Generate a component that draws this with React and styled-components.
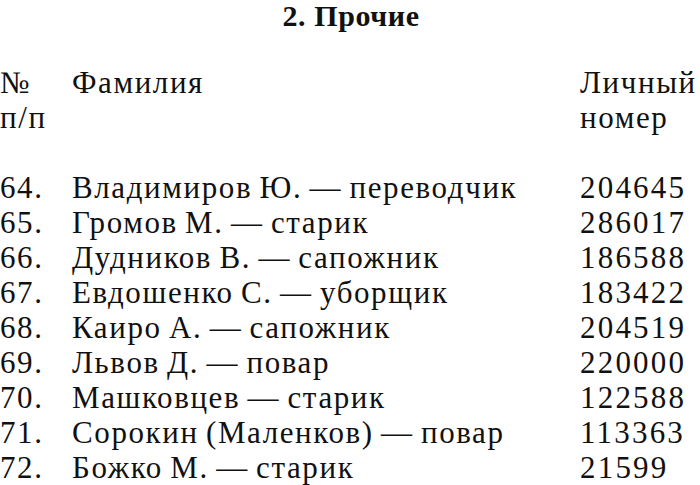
import React from 'react'
import styled, {createGlobalStyle} from 'styled-components'

const Global = createGlobalStyle`
    html, body {
      margin: 0;
      padding: 0;
      background: #fff;
    }
    body {
      width: 700px;
      height: 485px;
      overflow: hidden;
      font-family: "Liberation Serif", "Times New Roman", serif;
      color: #111;
    }
`

const rows = [
    ['64.', 'Владимиров Ю. — переводчик', '204645'],
    ['65.', 'Громов М. — старик', '286017'],
    ['66.', 'Дудников В. — сапожник', '186588'],
    ['67.', 'Евдошенко С. — уборщик', '183422'],
    ['68.', 'Каиро А. — сапожник', '204519'],
    ['69.', 'Львов Д. — повар', '220000'],
    ['70.', 'Машковцев — старик', '122588'],
    ['71.', 'Сорокин (Маленков) — повар', '113363'],
    ['72.', 'Божко М. — старик', '21599'],
]

export default function App() {
    return (<Page>
        <Global/>
        <Title>2. Прочие</Title>
        <Table>
            <Cell>№<br/>п/п</Cell>
            <Cell>Фамилия</Cell>
            <Cell>Личный<br/>номер</Cell>
        </Table>
        <Table $body>
            {rows.map(([n, name, num]) => (
                <React.Fragment key={n}>
                    <Cell>{n}</Cell>
                    <Cell>{name}</Cell>
                    <Cell $num>{num}</Cell>
                </React.Fragment>
            ))}
        </Table>
    </Page>);
}

const Page = styled.div`
    display: flex;
    flex-direction: column;
    font-family: "Liberation Serif", "Times New Roman", serif;
`

const Title = styled.h2`
    margin: 0;
    font-size: 30px;
    line-height: 32px;
    font-weight: bold;
    text-align: center;
    letter-spacing: 0.6px;
    padding-left: 2px;
`

const Table = styled.div`
    display: grid;
    grid-template-columns: 72px 508px 1fr;
    margin-top: ${p => p.$body ? '35px' : '33px'};
    font-size: 31px;
    line-height: 35px;
`

const Cell = styled.div`
    white-space: nowrap;
    letter-spacing: ${p => p.$num ? '2.2px' : '1.6px'};
    word-spacing: -2px;
`
